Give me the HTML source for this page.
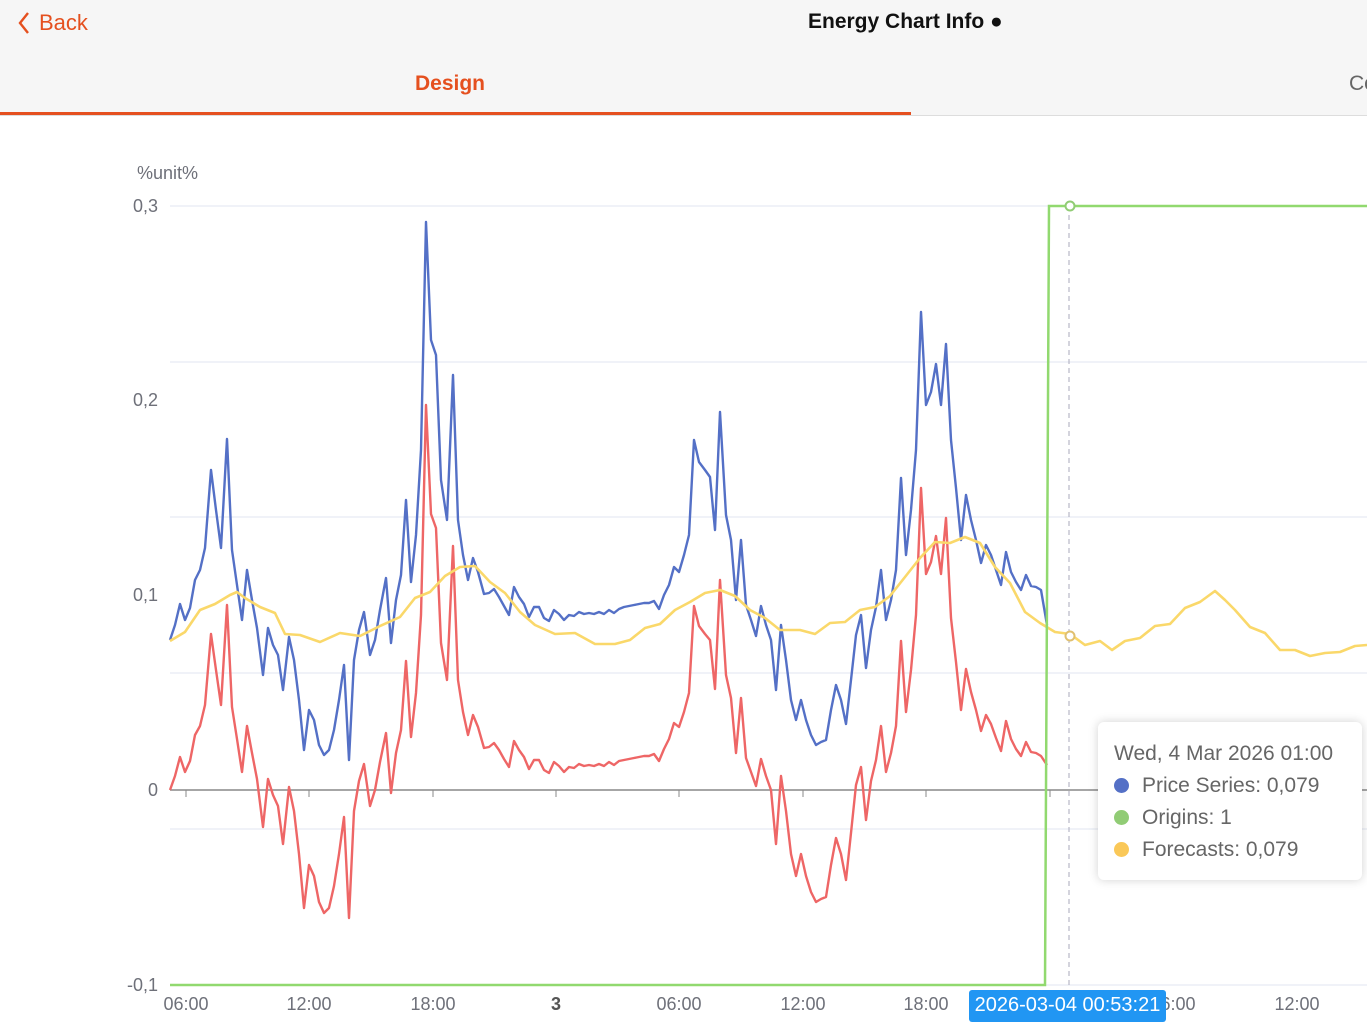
<!DOCTYPE html>
<html><head><meta charset="utf-8"><style>
body{margin:0;width:1367px;height:1022px;overflow:hidden;background:#fff;font-family:"Liberation Sans",sans-serif;position:relative}
.hdr{position:absolute;left:0;top:0;width:1367px;height:115px;background:#f6f6f6;border-bottom:1px solid #ddd}
.back{position:absolute;left:39px;top:10px;color:#e5501f;font-size:22px}
.title{position:absolute;left:808px;top:10px;font-size:21px;font-weight:bold;color:#111}
.tab{position:absolute;left:415px;top:72px;color:#e5501f;font-size:21px;font-weight:bold}
.co{position:absolute;left:1349px;top:72px;color:#666;font-size:21px}
.ul{position:absolute;left:0;top:112px;width:911px;height:3px;background:#e5501f}
.tip{position:absolute;left:1098px;top:722px;width:264px;height:158px;background:#fff;border-radius:6px;box-shadow:0 0 10px rgba(0,0,0,.18);color:#666;font-size:21px}
.tip div{position:absolute;left:16px;white-space:nowrap}
.dot{display:inline-block;width:15px;height:15px;border-radius:50%;margin-right:13px;vertical-align:-1px}
.badge{position:absolute;left:969px;top:990px;width:197px;height:32px;background:#2196f3;color:#fff;font-size:20px;line-height:30px;text-align:center;border-radius:3px}
</style></head><body>
<div class="hdr"></div>
<svg style="position:absolute;left:16px;top:11px" width="16" height="24"><path d="M12 2 L4 12 L12 22" stroke="#e5501f" stroke-width="2.4" fill="none"/></svg>
<div class="back">Back</div>
<div class="title">Energy Chart Info ●</div>
<div class="tab">Design</div><div class="co">Co</div>
<div class="ul"></div>
<svg id="c" style="position:absolute;left:0;top:0" width="1367" height="1022" font-family="Liberation Sans" font-size="18" fill="#6e7079"></svg>
<div class="tip">
<div style="top:20px">Wed, 4 Mar 2026 01:00</div>
<div style="top:52px"><span class="dot" style="background:#5470c6"></span>Price Series: 0,079</div>
<div style="top:84px"><span class="dot" style="background:#91cc75"></span>Origins: 1</div>
<div style="top:116px"><span class="dot" style="background:#fac858"></span>Forecasts: 0,079</div>
</div>
<div class="badge">2026-03-04 00:53:21</div>
<script>
var B="170,640 175,625 180,604 185,620 190,608 195,580 200,570 205,548 211,470 216,510 221,548 227,439 232,550 237,585 242,620 247,570 252,600 257,628 263,675 268,628 273,645 278,655 283,690 289,637 294,660 299,700 304,750 309,710 314,720 319,745 324,755 329,750 334,730 339,700 344,665 349,760 354,660 359,630 364,612 370,655 375,640 380,610 386,578 391,643 396,600 401,575 406,500 411,582 416,535 421,450 426,222 431,340 436,355 441,480 447,520 453,375 458,520 463,555 468,580 473,558 478,572 484,594 489,593 494,589 499,597 504,606 509,615 514,587 519,597 524,604 529,617 534,607 539,607 544,618 549,621 554,610 559,614 564,620 569,615 574,616 579,612 584,614 589,613 594,614 599,612 604,614 609,610 614,613 619,609 624,607 629,606 634,605 639,604 644,603 649,603 654,601 659,609 664,595 669,585 674,567 679,572 684,555 689,535 694,440 699,462 705,470 710,477 715,530 720,412 726,515 731,540 736,600 741,540 746,605 751,620 756,636 761,606 766,625 771,640 776,690 781,625 786,660 791,700 796,720 801,700 806,720 811,735 816,745 821,742 826,740 831,710 836,685 841,700 846,724 851,680 856,635 861,615 866,668 871,630 876,607 881,570 886,620 891,600 896,570 901,478 906,555 911,510 916,450 921,312 926,405 931,392 936,364 941,405 946,344 951,440 956,488 961,540 966,495 971,520 976,540 981,563 986,545 991,555 996,570 1001,585 1006,552 1011,572 1016,582 1021,590 1026,575 1031,586 1036,587 1041,590 1047,625";
var Y="170,643 185,630 200,612 215,602 230,597 237,590 245,600 260,605 275,615 285,632 300,637 320,640 340,635 360,634 380,628 400,615 415,600 430,590 445,578 460,565 475,568 490,580 505,595 520,610 535,627 555,632 575,635 595,642 615,646 630,638 645,630 660,622 675,612 690,600 705,595 720,588 735,598 750,608 765,620 780,628 800,632 815,632 830,625 845,620 860,612 875,605 890,598 905,575 920,560 935,540 950,545 965,535 980,545 995,565 1010,585 1025,610 1040,625 1055,630 1070,636 1085,643 1100,643 1112,648 1125,643 1140,636 1155,628 1170,622 1185,610 1200,600 1215,593 1225,598 1235,612 1250,625 1265,635 1280,648 1295,652 1310,654 1325,655 1340,650 1355,648 1367,643";
var R=B.split(" ").map(function(p){var a=p.split(",").map(Number);var y=a[1]+150+(640-a[1])*0.08+Math.max(0,a[1]-640)*0.15;if(a[0]>950)y+=12;if(a[0]==1047)y=765;return a[0]+","+y.toFixed(0)}).join(" ");
var Yw=Y.split(" ").map(function(p,i){var a=p.split(",").map(Number);return a[0]+","+(a[1]+(i%2?2:-2))}).join(" ");
var s='';
[206,362,517,673,829].forEach(function(y){s+='<line x1="170" x2="1367" y1="'+y+'" y2="'+y+'" stroke="#e0e6f1"/>'});
s+='<line x1="170" x2="1367" y1="985" y2="985" stroke="#e0e6f1"/>';
s+='<line x1="170" x2="1367" y1="790" y2="790" stroke="#888" stroke-width="1.5"/>';
[186,309,433,556,679,803,926,1050,1173,1297].forEach(function(x){s+='<line x1="'+x+'" x2="'+x+'" y1="790" y2="797" stroke="#888"/>'});
s+='<text x="137" y="179">%unit%</text>';
[["0,3",212],["0,2",406],["0,1",601],["0",796],["-0,1",991]].forEach(function(t){s+='<text x="158" y="'+t[1]+'" text-anchor="end">'+t[0]+'</text>'});
[["06:00",186],["12:00",309],["18:00",433],["3",556],["06:00",679],["12:00",803],["18:00",926],["06:00",1173],["12:00",1297]].forEach(function(t){s+='<text x="'+t[1]+'" y="1010" text-anchor="middle"'+(t[0]=="3"?' font-weight="bold" fill="#555"':'')+'>'+t[0]+'</text>'});
s+='<line x1="1069" x2="1069" y1="206" y2="985" stroke="#aab" stroke-dasharray="5,4"/>';
s+='<polyline points="'+R+'" fill="none" stroke="#ee6666" stroke-width="2.4" stroke-linejoin="round"/>';
s+='<polyline points="'+B+'" fill="none" stroke="#5470c6" stroke-width="2.4" stroke-linejoin="round"/>';
s+='<polyline points="'+Yw+'" fill="none" stroke="#fad86a" stroke-width="2.6" stroke-linejoin="round"/>';
s+='<polyline points="170,985 1045,985 1049,206 1367,206" fill="none" stroke="#91d96f" stroke-width="2.5"/>';
s+='<circle cx="1070" cy="206" r="4.5" fill="#fff" stroke="#91cc75" stroke-width="2"/><circle cx="1070" cy="636" r="4.5" fill="#fff" stroke="#e0c070" stroke-width="2"/>';
document.getElementById('c').innerHTML=s;
</script>
</body></html>
